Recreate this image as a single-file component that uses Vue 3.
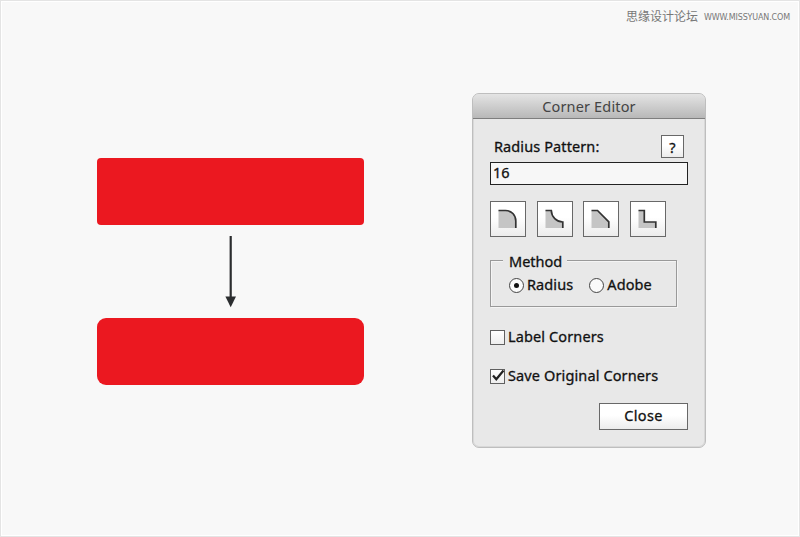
<template>
  <main class="stage">
    <header class="watermark">
      <span class="site-name">思缘设计论坛</span>
      <span class="site-url">WWW.MISSYUAN.COM</span>
    </header>

    <div class="content">
      <section class="shapes">
        <div class="shape"></div>
        <svg class="arrow" width="12" height="72" viewBox="0 0 12 72">
          <path d="M5.7 0V62" stroke="#2b2d2f" stroke-width="2.2" />
          <path d="M0.4 60.5H11L5.7 71.2Z" fill="#2b2d2f" />
        </svg>
        <div class="shape rounded"></div>
      </section>

      <section class="panel">
        <h1 class="panel-title"><span>Corner Editor</span></h1>
        <div class="panel-body">
          <div class="pattern-row">
            <label class="pattern-label" for="pattern">Radius Pattern:</label>
            <button class="btn help">?</button>
          </div>
          <input id="pattern" v-model="pattern" class="pattern-input" type="text" />

          <div class="corner-types">
            <button v-for="c in corners" :key="c.name" class="btn corner" :aria-label="c.name">
              <svg width="20" height="20" viewBox="0 0 20 20">
                <path :d="c.line + 'H0.5V1.5Z'" fill="#c5c5c5" />
                <path :d="c.line" fill="none" stroke="#333" stroke-width="1.7" />
              </svg>
            </button>
          </div>

          <div class="method">
            <span class="legend">Method</span>
            <div class="radios">
              <label v-for="m in methods" :key="m" class="radio" @click="method = m">
                <span class="radio-dot" :class="{ checked: method === m }"></span>
                <span class="radio-text">{{ m }}</span>
              </label>
            </div>
          </div>

          <label class="check" @click="labelCorners = !labelCorners">
            <span class="box">
              <svg v-if="labelCorners" width="15" height="15" viewBox="0 0 15 15">
                <path d="M3 6.5L6.3 10.3L13.5 1.5" />
              </svg>
            </span>
            <span class="check-text">Label Corners</span>
          </label>
          <label class="check save" @click="saveOriginal = !saveOriginal">
            <span class="box">
              <svg v-if="saveOriginal" width="15" height="15" viewBox="0 0 15 15">
                <path d="M3 6.5L6.3 10.3L13.5 1.5" />
              </svg>
            </span>
            <span class="check-text">Save Original Corners</span>
          </label>

          <button class="btn close"><span>Close</span></button>
        </div>
      </section>
    </div>
  </main>
</template>

<script setup>
import { ref } from 'vue'

const pattern = ref('16')
const method = ref('Radius')
const methods = ['Radius', 'Adobe']
const labelCorners = ref(false)
const saveOriginal = ref(true)

const corners = [
  { name: 'Rounded', line: 'M0.5 1.5H7.5C13.5 1.5 17.8 6 17.8 12V19' },
  { name: 'Inverted', line: 'M0.5 1.5H6.3C6.5 8 11.5 12.8 17.8 13V19' },
  { name: 'Chamfer', line: 'M0.5 1.5H6.5L17.8 12.8V19' },
  { name: 'Step', line: 'M0.5 1.5H6.3V13H17.8V19' }
]
</script>

<style>
body {
  margin: 0;
  background: #f8f8f8;
}
</style>

<style scoped>
.stage {
  box-sizing: border-box;
  width: 800px;
  height: 537px;
  border: 1px solid #e4e4e4;
  box-shadow: inset 0 0 0 1px #fff;
  background: #f8f8f8;
  color: #111;
  font-family: "Noto Sans", "Open Sans", "Noto Sans CJK SC", sans-serif;
  font-size: 14.5px;
  overflow: hidden;
}

.watermark {
  display: flex;
  justify-content: flex-end;
  align-items: center;
  height: 29px;
  padding-right: 10px;
  color: #777;
}

.site-name {
  font: 12px/29px "Noto Sans CJK SC", sans-serif;
  margin-right: 6px;
}

.site-url {
  width: 85px;
  font: 8px/29px "DejaVu Sans", sans-serif;
  letter-spacing: -0.15px;
  padding-top: 3px;
  white-space: nowrap;
}

.content {
  display: flex;
  align-items: flex-start;
  gap: 108px;
  padding: 63px 0 0 96px;
}

.shapes {
  display: flex;
  flex-direction: column;
  align-items: center;
  width: 267px;
  padding-top: 65px;
}

.shape {
  width: 267px;
  height: 66.5px;
  border-radius: 4px;
  background: #eb1820;
}

.shape.rounded {
  border-radius: 9px;
}

.arrow {
  display: block;
  margin: 11.5px 0 10px;
}

.panel {
  box-sizing: border-box;
  width: 234px;
  height: 355px;
  border: 1px solid #bebebe;
  border-radius: 7px;
  background: #e8e8e8;
  box-shadow: inset 0 0 0 1px #d8d8d8;
  overflow: hidden;
  -webkit-text-stroke: 0.3px currentColor;
}

.panel-title {
  box-sizing: border-box;
  height: 25px;
  margin: 0;
  border-bottom: 1px solid #7e7e7e;
  background: linear-gradient(#e4e4e4, #b8b8b8);
  color: #444;
  font-size: 14.5px;
  font-weight: 400;
  letter-spacing: 0.15px;
  line-height: 25px;
  text-align: center;
  -webkit-text-stroke-width: 0;
}

.panel-body {
  padding: 16px 17px 0;
}

.pattern-row {
  display: flex;
  justify-content: space-between;
  height: 23px;
  padding: 0 4px;
}

.pattern-label {
  letter-spacing: 0.1px;
  line-height: 22px;
}

.btn {
  box-sizing: border-box;
  display: flex;
  align-items: center;
  justify-content: center;
  padding: 0;
  border: 1px solid #686868;
  border-radius: 0;
  background: linear-gradient(#fff 45%, #ececec);
  color: #111;
  font: inherit;
}

.help {
  width: 23px;
  height: 23px;
}

.pattern-input {
  box-sizing: border-box;
  display: block;
  width: 198px;
  height: 23px;
  margin-top: 4px;
  padding: 0 2px 4px;
  border: 1px solid #222;
  border-radius: 0;
  outline: none;
  background: #f7f7f7;
  color: #111;
  font: inherit;
  line-height: 17px;
}

.corner-types {
  display: flex;
  justify-content: space-between;
  width: 176px;
  margin-top: 16px;
}

.corner {
  width: 36px;
  height: 36px;
}

.method {
  box-sizing: border-box;
  width: 187px;
  height: 47px;
  margin-top: 23px;
  border: 1px solid #999;
  box-shadow: inset 1px 1px 0 #f4f4f4, 1px 1px 0 #f4f4f4;
}

.legend {
  display: block;
  width: 54px;
  height: 20px;
  margin: -10px 0 0 12px;
  padding-left: 6px;
  padding-right: 4px;
  background: #e8e8e8;
  line-height: 20px;
}

.radios {
  display: flex;
  gap: 16px;
  padding: 4px 0 0 18px;
}

.radio {
  display: flex;
  align-items: center;
  height: 20px;
}

.radio-text {
  padding-bottom: 2px;
  letter-spacing: 0.1px;
}

.radio-dot {
  box-sizing: border-box;
  display: flex;
  align-items: center;
  justify-content: center;
  width: 15px;
  height: 15px;
  margin-right: 3px;
  border: 1px solid #444;
  border-radius: 50%;
  background: #fafafa;
}

.radio-dot.checked::after {
  content: "";
  width: 5px;
  height: 5px;
  border-radius: 50%;
  background: #111;
}

.check {
  display: flex;
  align-items: center;
  height: 20px;
  margin-top: 20px;
}

.check.save {
  margin-top: 19px;
}

.check-text {
  padding-bottom: 3px;
  letter-spacing: 0.12px;
}

.box {
  box-sizing: border-box;
  width: 15px;
  height: 15px;
  margin-right: 3px;
  border: 1px solid #606060;
  background: linear-gradient(#fff, #eee);
}

.box svg {
  display: block;
  margin: -1px;
}

.box path {
  fill: none;
  stroke: #222;
  stroke-width: 2.2;
}

.close {
  width: 89px;
  height: 27px;
  margin: 17px 0 0 auto;
  padding-bottom: 4px;
  letter-spacing: 0.3px;
}
</style>
